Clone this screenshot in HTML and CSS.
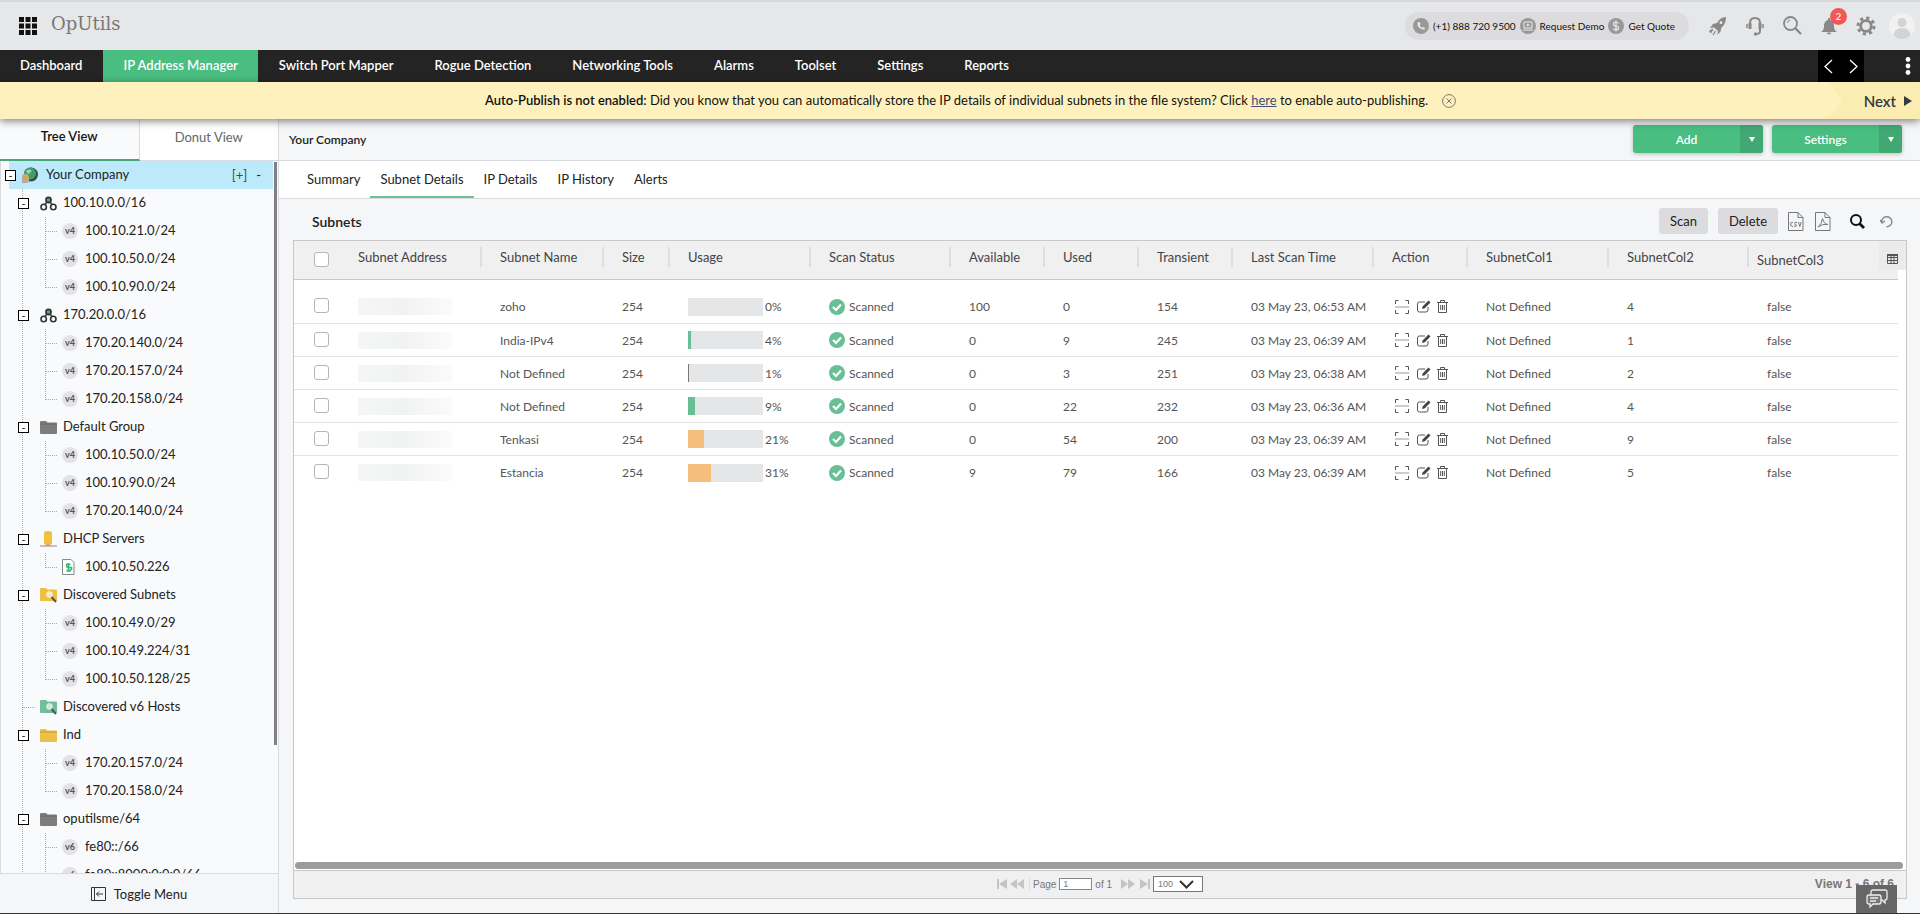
FILE: index.html
```html
<!DOCTYPE html>
<html lang="en">

<head>
    <meta charset="UTF-8">
    <meta name="viewport" content="width=device-width, initial-scale=1.0">
    <title>OpUtils</title>
    <link rel="stylesheet" href="styles.css">
</head>

<body>
    <!-- shared icons -->
    <svg class="sprite" aria-hidden="true">
        <symbol id="i-net" viewBox="0 0 17 15">
            <path d="M7 6 4.500 9M10 6l2.500 3" stroke="#444" stroke-width="1.500" />
            <g fill="none" stroke="#333" stroke-width="1.600">
                <circle cx="8.500" cy="4" r="2.600" fill="#5c9c7c" />
                <circle cx="3.700" cy="11" r="2.700" />
                <circle cx="13.300" cy="11" r="2.700" />
            </g>
        </symbol>
        <symbol id="i-folder" viewBox="0 0 17 14">
            <path d="M0 2q0-1 1-1h5l1.500 1.500H16q1 0 1 1V13q0 1-1 1H1q-1 0-1-1z" fill="currentColor" />
            <path d="M0 4h17" stroke="#000" stroke-opacity=".18" />
        </symbol>
        <symbol id="i-find" viewBox="0 0 17 16">
            <path d="M0 2q0-1 1-1h5l1.500 1.500H16q1 0 1 1V13q0 1-1 1H1q-1 0-1-1z" fill="currentColor" />
            <circle cx="9.500" cy="7.500" r="3" fill="#fff" fill-opacity=".65" stroke="#fff" stroke-opacity=".5" />
            <path d="m11.500 10 4.500 5" stroke="#555" stroke-width="2" />
        </symbol>
        <symbol id="i-ok" viewBox="0 0 16 16">
            <circle cx="8" cy="8" r="8" fill="#68bf96" />
            <path d="m4 8 3 3 5-5.500" fill="none" stroke="#fff" stroke-width="2.200" />
        </symbol>
        <symbol id="i-scan" viewBox="0 0 14 14">
            <path d="M.500 4V.500H3.500M10.500.500h3V4M.500 10v3.500h3M10.500 13.500h3V10" fill="none" stroke="#555" />
            <path d="M0 7h14" stroke="#999" />
        </symbol>
        <symbol id="i-edit" viewBox="0 0 15 13">
            <path d="M11 7v3q0 2-2 2H2.500q-2 0-2-2V4q0-2 2-2H8" fill="none" stroke="#555" />
            <path d="m5 9 .800-2.800L11.500.500l2 2L7.800 8.200z" fill="#444" />
        </symbol>
        <symbol id="i-trash" viewBox="0 0 11 13">
            <path d="M0 2.500h11M3.500 2.500v-2h4v2M1.500 2.500v10h8v-10M3.700 5v5M5.500 5v5M7.300 5v5" fill="none" stroke="#555" />
        </symbol>
    </svg>

    <header class="topbar">
        <button class="icon-btn" aria-label="Apps">
            <svg width="18" height="18" viewBox="0 0 18 18"><path d="M0 0h5v5H0zM6.500 0h5v5h-5zM13 0h5v5h-5zM0 6.500h5v5H0zM6.500 6.500h5v5h-5zM13 6.500h5v5h-5zM0 13h5v5H0zM6.500 13h5v5h-5zM13 13h5v5h-5z" fill="#111" /></svg>
        </button>
        <span class="brand">OpUtils</span>
        <div class="contact">
            <svg width="16" height="16" viewBox="0 0 16 16"><circle cx="8" cy="8" r="8" fill="#999" /><path d="M5 4q-1.500 3 1 5.500T11.500 11.500l.500-1.500-2-1-1 .800Q7.500 9 6.700 7.200L7.500 6l-1-2z" fill="#e8e8e8" /></svg>
            <a href="#">(+1) 888 720 9500</a>
            <svg width="16" height="16" viewBox="0 0 16 16"><circle cx="8" cy="8" r="8" fill="#999" /><path d="M4 4h8v6H4zM3 12h10" fill="none" stroke="#e8e8e8" /><path d="m7 5.500 3 1.500-3 1.500z" fill="#e8e8e8" /></svg>
            <a href="#">Request Demo</a>
            <svg width="16" height="16" viewBox="0 0 16 16"><circle cx="8" cy="8" r="8" fill="#999" /><path d="M10.500 5.500Q9.500 4 8 4 5.500 4 5.500 6T8 8t2.500 2T8 12q-2 0-2.500-1.500M8 2.500v11" fill="none" stroke="#e8e8e8" stroke-width="1.200" /></svg>
            <a href="#">Get Quote</a>
        </div>
        <div class="tools">
            <button class="icon-btn" aria-label="Quick start">
                <svg width="18" height="20" viewBox="0 0 18 20"><path d="M17 1q-6 0-9 6L4 8l-3 4 4-.500L9 15l-.500 4 3-3.500 1-4Q17 8 17 1z" fill="#888" /><circle cx="12" cy="6.500" r="1.500" fill="#e6e7e9" /><path d="m4 13-2.500 4M6.500 15 4 19M2.500 13.500.500 16" stroke="#888" stroke-width="1.300" /></svg>
            </button>
            <button class="icon-btn" aria-label="Support">
                <svg width="18" height="20" viewBox="0 0 18 20"><path d="M4 13V7q0-5 5-5t5 5v8q0 3-4 3" fill="none" stroke="#888" stroke-width="2" /><path d="M1 8v4M17 8v4" stroke="#888" stroke-width="1.500" /><circle cx="9.500" cy="18" r="1.700" fill="#888" /><path d="M4 7v6M14 7v6" stroke="#888" stroke-width="3" /></svg>
            </button>
            <button class="icon-btn" aria-label="Search">
                <svg width="19" height="19" viewBox="0 0 19 19" fill="none" stroke="#888"><circle cx="7.500" cy="7.500" r="6.500" stroke-width="1.800" /><path d="m12.500 12.500 5.500 5.500" stroke-width="2.400" /><path d="M4.500 7q0-2.500 2.500-3" /></svg>
            </button>
            <button class="icon-btn bell" aria-label="Notifications">
                <svg width="16" height="18" viewBox="0 0 16 18"><path d="M0 15q3-1.500 3-6 0-5 4-6V1h2v2q4 1 4 6 0 4.500 3 6z" fill="#888" /><path d="M6 15.500h4q0 2-2 2t-2-2z" fill="#888" /></svg>
                <span class="badge">2</span>
            </button>
            <button class="icon-btn" aria-label="Preferences">
                <svg width="20" height="20" viewBox="0 0 20 20" fill="none" stroke="#888"><circle cx="10" cy="10" r="5.300" stroke-width="2.800" /><circle cx="10" cy="10" r="8" stroke-width="3" stroke-dasharray="3.140 3.140" /></svg>
            </button>
        </div>
        <button class="icon-btn account" aria-label="Account">
            <svg width="26" height="26" viewBox="0 0 26 26"><circle cx="13" cy="13" r="13" fill="#f1f1f2" /><circle cx="13" cy="9.500" r="4.500" fill="#d2d3d5" /><path d="M4.500 22q1-7 8.500-7t8.500 7Q18 26 13 26t-8.500-4z" fill="#d2d3d5" /></svg>
        </button>
    </header>

    <nav class="mainnav">
        <a href="#">Dashboard</a>
        <a href="#" class="active">IP Address Manager</a>
        <a href="#">Switch Port Mapper</a>
        <a href="#">Rogue Detection</a>
        <a href="#">Networking Tools</a>
        <a href="#">Alarms</a>
        <a href="#">Toolset</a>
        <a href="#">Settings</a>
        <a href="#">Reports</a>
        <div class="nav-arrows">
            <button class="icon-btn" aria-label="Scroll left"><svg width="9" height="15" viewBox="0 0 9 15"><path d="M8 1 1 7.500 8 14" fill="none" stroke="#fff" stroke-width="1.300" /></svg></button>
            <button class="icon-btn" aria-label="Scroll right"><svg width="9" height="15" viewBox="0 0 9 15"><path d="m1 1 7 6.500L1 14" fill="none" stroke="#fff" stroke-width="1.300" /></svg></button>
        </div>
        <button class="icon-btn more" aria-label="More"><svg width="6" height="18" viewBox="0 0 6 18" fill="#fff"><circle cx="3" cy="2.500" r="2.400" /><circle cx="3" cy="9" r="2.400" /><circle cx="3" cy="15.500" r="2.400" /></svg></button>
    </nav>

    <div class="notice">
        <p><b>Auto-Publish is not enabled:</b> Did you know that you can automatically store the IP details of individual subnets in the file system? Click <a href="#">here</a> to enable auto-publishing.</p>
        <button class="icon-btn" aria-label="Dismiss"><svg width="14" height="14" viewBox="0 0 14 14" fill="none" stroke="#777"><circle cx="7" cy="7" r="6.400" /><path d="m4.500 4.500 5 5M9.500 4.500l-5 5" /></svg></button>
        <button class="next">Next <svg width="8" height="10" viewBox="0 0 8 10"><path d="m0 0 8 5-8 5z" fill="#333a44" /></svg></button>
    </div>

    <div class="page">
        <aside class="sidebar">
            <div class="view-tabs">
                <button class="active">Tree View</button>
                <button>Donut View</button>
            </div>
            <div class="tree-box">
                <div class="tree">
                    <div class="node root">
                        <button class="toggle">-</button>
                        <svg width="16" height="16" viewBox="0 0 16 16"><circle cx="9" cy="7.500" r="7" fill="#3b4a44" /><circle cx="8" cy="6.500" r="6" fill="#3f9d6c" /><path d="M4 4q3-3 6 0-2 1-3 3-2 0-3-3z" fill="#9fd4b4" /><path d="M0 16V9q2-4 5-1l2 2v5q-3 2-7 1z" fill="#b5aaa0" /><circle cx="4.500" cy="9.500" r="2.300" fill="#e0a93c" /></svg>
                        <a href="#">Your Company</a>
                        <span class="expand">[+]</span><span>-</span>
                    </div>
                    <ul>
                        <li>
                            <div class="node"><button class="toggle">-</button><svg width="17" height="15"><use href="#i-net" /></svg><a href="#">100.10.0.0/16</a></div>
                            <ul>
                                <li class="node"><span class="ver">v4</span><a href="#">100.10.21.0/24</a></li>
                                <li class="node"><span class="ver">v4</span><a href="#">100.10.50.0/24</a></li>
                                <li class="node"><span class="ver">v4</span><a href="#">100.10.90.0/24</a></li>
                            </ul>
                        </li>
                        <li>
                            <div class="node"><button class="toggle">-</button><svg width="17" height="15"><use href="#i-net" /></svg><a href="#">170.20.0.0/16</a></div>
                            <ul>
                                <li class="node"><span class="ver">v4</span><a href="#">170.20.140.0/24</a></li>
                                <li class="node"><span class="ver">v4</span><a href="#">170.20.157.0/24</a></li>
                                <li class="node"><span class="ver">v4</span><a href="#">170.20.158.0/24</a></li>
                            </ul>
                        </li>
                        <li>
                            <div class="node"><button class="toggle">-</button><svg class="gray" width="17" height="14"><use href="#i-folder" /></svg><a href="#">Default Group</a></div>
                            <ul>
                                <li class="node"><span class="ver">v4</span><a href="#">100.10.50.0/24</a></li>
                                <li class="node"><span class="ver">v4</span><a href="#">100.10.90.0/24</a></li>
                                <li class="node"><span class="ver">v4</span><a href="#">170.20.140.0/24</a></li>
                            </ul>
                        </li>
                        <li>
                            <div class="node"><button class="toggle">-</button><svg width="17" height="16" viewBox="0 0 17 16"><path d="M4 2q0-2 4-2t4 2v10q0 2-4 2t-4-2z" fill="#efc33c" /><path d="M4 2q4 2 8 0M6 12h4v3H6z" fill="#eda968" /><path d="M0 15h17" stroke="#888" /></svg><a href="#">DHCP Servers</a></div>
                            <ul>
                                <li class="node"><svg width="17" height="16" viewBox="0 0 17 16"><path d="M.500.500h8.500l3 3v12H.500z" fill="#fff" stroke="#888" /><path d="M8.500 5.500Q4.500 4 4.500 6.500t3.500 2-.200 3.500q-2 0-3.300-.800M6.500 4v9" fill="none" stroke="#35b879" stroke-width="1.600" /></svg><a href="#">100.10.50.226</a></li>
                            </ul>
                        </li>
                        <li>
                            <div class="node"><button class="toggle">-</button><svg class="yellow" width="17" height="16"><use href="#i-find" /></svg><a href="#">Discovered Subnets</a></div>
                            <ul>
                                <li class="node"><span class="ver">v4</span><a href="#">100.10.49.0/29</a></li>
                                <li class="node"><span class="ver">v4</span><a href="#">100.10.49.224/31</a></li>
                                <li class="node"><span class="ver">v4</span><a href="#">100.10.50.128/25</a></li>
                            </ul>
                        </li>
                        <li>
                            <div class="node leaf"><svg class="green" width="17" height="16"><use href="#i-find" /></svg><a href="#">Discovered v6 Hosts</a></div>
                        </li>
                        <li>
                            <div class="node"><button class="toggle">-</button><svg class="yellow" width="17" height="14"><use href="#i-folder" /></svg><a href="#">Ind</a></div>
                            <ul>
                                <li class="node"><span class="ver">v4</span><a href="#">170.20.157.0/24</a></li>
                                <li class="node"><span class="ver">v4</span><a href="#">170.20.158.0/24</a></li>
                            </ul>
                        </li>
                        <li>
                            <div class="node"><button class="toggle">-</button><svg class="gray" width="17" height="14"><use href="#i-folder" /></svg><a href="#">oputilsme/64</a></div>
                            <ul>
                                <li class="node"><span class="ver">v6</span><a href="#">fe80::/66</a></li>
                                <li class="node"><span class="ver">v6</span><a href="#">fe80::8000:0:0:0/66</a></li>
                                <li class="node"></li>
                            </ul>
                        </li>
                    </ul>
                </div>
                <div class="scroll-track"><div class="scroll-thumb"></div></div>
            </div>
            <button class="toggle-menu">
                <svg width="15" height="14" viewBox="0 0 15 14" fill="none" stroke="#333"><path d="M.500.500h14v13H.500zM3.500.500v13M12 7H5.500M8 4.500 5.500 7 8 9.500" /></svg>
                Toggle Menu
            </button>
        </aside>

        <main>
            <div class="crumb">
                <h1>Your Company</h1>
                <div class="split"><button>Add</button><button class="drop" aria-label="Add options"><svg width="6" height="5"><path d="M0 0h6L3 5z" fill="#fff" /></svg></button></div>
                <div class="split"><button>Settings</button><button class="drop" aria-label="Settings options"><svg width="6" height="5"><path d="M0 0h6L3 5z" fill="#fff" /></svg></button></div>
            </div>
            <nav class="subnav">
                <a href="#">Summary</a>
                <a href="#" class="active">Subnet Details</a>
                <a href="#">IP Details</a>
                <a href="#">IP History</a>
                <a href="#">Alerts</a>
            </nav>
            <div class="toolbar">
                <h2>Subnets</h2>
                <button class="grey-btn">Scan</button>
                <button class="grey-btn">Delete</button>
                <div class="exports">
                    <button class="icon-btn" aria-label="Export CSV"><svg width="16" height="19" viewBox="0 0 16 19" fill="none" stroke="#777"><path d="M.500.500h9.500l5 5v13H.500zM10 .500v5h5" /><path d="M5 10.500Q2.500 9.500 2.500 12T5 14.500M9 10.500Q6.500 9.500 6.800 11.500T8.500 13q0 2-2.500 1.300M10.500 10l1.300 4.500L13.200 10" /></svg></button>
                    <button class="icon-btn" aria-label="Export PDF"><svg width="16" height="19" viewBox="0 0 16 19" fill="none" stroke="#777"><path d="M.500.500h9.500l5 5v13H.500zM10 .500v5h5" /><path d="M3 15q4-3 4.500-8.500Q9 12 13 12.500q-6-1-10 2.500z" /></svg></button>
                </div>
                <button class="icon-btn" aria-label="Search subnets"><svg width="15" height="15" viewBox="0 0 15 15" fill="none" stroke="#111"><circle cx="6" cy="6" r="5" stroke-width="2" /><path d="m9.500 9.500 4.500 4.500" stroke-width="2.800" /></svg></button>
                <button class="icon-btn refresh" aria-label="Refresh"><svg width="13" height="13" viewBox="0 0 13 13" fill="none" stroke="#888" stroke-width="1.400"><path d="M2 8A5 5 0 1 1 6.500 11.700M0 5l2 3 3-2" /></svg></button>
            </div>

            <section class="grid">
                <div class="grid-body">
                    <table>
                        <colgroup>
                            <col class="w-check"><col class="w-addr"><col class="w-name"><col class="w-size"><col class="w-wide"><col class="w-status"><col class="w-num"><col class="w-num"><col class="w-num"><col class="w-wide"><col class="w-num"><col class="w-wide"><col class="w-status"><col class="w-last">
                        </colgroup>
                        <thead>
                            <tr>
                                <th class="check"><input type="checkbox" aria-label="Select all"></th>
                                <th><div>Subnet Address</div></th>
                                <th><div>Subnet Name</div></th>
                                <th><div>Size</div></th>
                                <th><div>Usage</div></th>
                                <th><div>Scan Status</div></th>
                                <th><div>Available</div></th>
                                <th><div>Used</div></th>
                                <th><div>Transient</div></th>
                                <th><div>Last Scan Time</div></th>
                                <th><div>Action</div></th>
                                <th><div>SubnetCol1</div></th>
                                <th><div>SubnetCol2</div></th>
                                <th class="last"><div>SubnetCol3 <button class="columns" aria-label="Choose columns"><svg width="11" height="10" viewBox="0 0 11 10"><path d="M.500.500h10v9H.500zM.500 3.500h10M.500 6.500h10M4 1v8.500M7 1v8.500" fill="none" stroke="#555" /><path d="M0 0h11v2H0z" fill="#555" /></svg></button></div></th>
                            </tr>
                        </thead>
                        <tbody>
                            <tr>
                                <td class="check"><input type="checkbox" aria-label="Select zoho"></td>
                                <td><div class="masked"></div></td>
                                <td>zoho</td>
                                <td>254</td>
                                <td><div class="usage"><div class="bar"></div>0%</div></td>
                                <td><div class="status"><svg width="16" height="16"><use href="#i-ok" /></svg>Scanned</div></td>
                                <td>100</td>
                                <td>0</td>
                                <td>154</td>
                                <td>03 May 23, 06:53 AM</td>
                                <td><div class="actions"><button class="icon-btn scan" aria-label="Scan"><svg width="14" height="14"><use href="#i-scan" /></svg></button><button class="icon-btn" aria-label="Edit"><svg width="15" height="13"><use href="#i-edit" /></svg></button><button class="icon-btn" aria-label="Delete"><svg width="11" height="13"><use href="#i-trash" /></svg></button></div></td>
                                <td>Not Defined</td>
                                <td>4</td>
                                <td>false</td>
                            </tr>
                            <tr>
                                <td class="check"><input type="checkbox" aria-label="Select India-IPv4"></td>
                                <td><div class="masked"></div></td>
                                <td>India-IPv4</td>
                                <td>254</td>
                                <td><div class="usage"><div class="bar"><div class="low" style="width: 4%"></div></div>4%</div></td>
                                <td><div class="status"><svg width="16" height="16"><use href="#i-ok" /></svg>Scanned</div></td>
                                <td>0</td>
                                <td>9</td>
                                <td>245</td>
                                <td>03 May 23, 06:39 AM</td>
                                <td><div class="actions"><button class="icon-btn scan" aria-label="Scan"><svg width="14" height="14"><use href="#i-scan" /></svg></button><button class="icon-btn" aria-label="Edit"><svg width="15" height="13"><use href="#i-edit" /></svg></button><button class="icon-btn" aria-label="Delete"><svg width="11" height="13"><use href="#i-trash" /></svg></button></div></td>
                                <td>Not Defined</td>
                                <td>1</td>
                                <td>false</td>
                            </tr>
                            <tr>
                                <td class="check"><input type="checkbox" aria-label="Select subnet 3"></td>
                                <td><div class="masked"></div></td>
                                <td>Not Defined</td>
                                <td>254</td>
                                <td><div class="usage"><div class="bar"><div class="min" style="width: 1%"></div></div>1%</div></td>
                                <td><div class="status"><svg width="16" height="16"><use href="#i-ok" /></svg>Scanned</div></td>
                                <td>0</td>
                                <td>3</td>
                                <td>251</td>
                                <td>03 May 23, 06:38 AM</td>
                                <td><div class="actions"><button class="icon-btn scan" aria-label="Scan"><svg width="14" height="14"><use href="#i-scan" /></svg></button><button class="icon-btn" aria-label="Edit"><svg width="15" height="13"><use href="#i-edit" /></svg></button><button class="icon-btn" aria-label="Delete"><svg width="11" height="13"><use href="#i-trash" /></svg></button></div></td>
                                <td>Not Defined</td>
                                <td>2</td>
                                <td>false</td>
                            </tr>
                            <tr>
                                <td class="check"><input type="checkbox" aria-label="Select subnet 4"></td>
                                <td><div class="masked"></div></td>
                                <td>Not Defined</td>
                                <td>254</td>
                                <td><div class="usage"><div class="bar"><div class="low" style="width: 9%"></div></div>9%</div></td>
                                <td><div class="status"><svg width="16" height="16"><use href="#i-ok" /></svg>Scanned</div></td>
                                <td>0</td>
                                <td>22</td>
                                <td>232</td>
                                <td>03 May 23, 06:36 AM</td>
                                <td><div class="actions"><button class="icon-btn scan" aria-label="Scan"><svg width="14" height="14"><use href="#i-scan" /></svg></button><button class="icon-btn" aria-label="Edit"><svg width="15" height="13"><use href="#i-edit" /></svg></button><button class="icon-btn" aria-label="Delete"><svg width="11" height="13"><use href="#i-trash" /></svg></button></div></td>
                                <td>Not Defined</td>
                                <td>4</td>
                                <td>false</td>
                            </tr>
                            <tr>
                                <td class="check"><input type="checkbox" aria-label="Select Tenkasi"></td>
                                <td><div class="masked"></div></td>
                                <td>Tenkasi</td>
                                <td>254</td>
                                <td><div class="usage"><div class="bar"><div class="mid" style="width: 21%"></div></div>21%</div></td>
                                <td><div class="status"><svg width="16" height="16"><use href="#i-ok" /></svg>Scanned</div></td>
                                <td>0</td>
                                <td>54</td>
                                <td>200</td>
                                <td>03 May 23, 06:39 AM</td>
                                <td><div class="actions"><button class="icon-btn scan" aria-label="Scan"><svg width="14" height="14"><use href="#i-scan" /></svg></button><button class="icon-btn" aria-label="Edit"><svg width="15" height="13"><use href="#i-edit" /></svg></button><button class="icon-btn" aria-label="Delete"><svg width="11" height="13"><use href="#i-trash" /></svg></button></div></td>
                                <td>Not Defined</td>
                                <td>9</td>
                                <td>false</td>
                            </tr>
                            <tr>
                                <td class="check"><input type="checkbox" aria-label="Select Estancia"></td>
                                <td><div class="masked"></div></td>
                                <td>Estancia</td>
                                <td>254</td>
                                <td><div class="usage"><div class="bar"><div class="mid" style="width: 31%"></div></div>31%</div></td>
                                <td><div class="status"><svg width="16" height="16"><use href="#i-ok" /></svg>Scanned</div></td>
                                <td>9</td>
                                <td>79</td>
                                <td>166</td>
                                <td>03 May 23, 06:39 AM</td>
                                <td><div class="actions"><button class="icon-btn scan" aria-label="Scan"><svg width="14" height="14"><use href="#i-scan" /></svg></button><button class="icon-btn" aria-label="Edit"><svg width="15" height="13"><use href="#i-edit" /></svg></button><button class="icon-btn" aria-label="Delete"><svg width="11" height="13"><use href="#i-trash" /></svg></button></div></td>
                                <td>Not Defined</td>
                                <td>5</td>
                                <td>false</td>
                            </tr>
                        </tbody>
                    </table>
                </div>
                <div class="hscroll"></div>
                <footer class="pager">
                    <div class="pages">
                        <button class="icon-btn" aria-label="First page"><svg width="10" height="10" viewBox="0 0 10 10" fill="#c4c4c4"><path d="M0 0h2v10H0zM10 0v10L2 5z" /></svg></button>
                        <button class="icon-btn" aria-label="Previous page"><svg width="14" height="10" viewBox="0 0 14 10" fill="#c4c4c4"><path d="M7 0v10L0 5zM14 0v10L7 5z" /></svg></button>
                        <label class="page-label">Page <input type="text" value="1"></label>
                        <span>of 1</span>
                        <button class="icon-btn next-page" aria-label="Next page"><svg width="14" height="10" viewBox="0 0 14 10" fill="#c4c4c4"><path d="M0 0v10l7-5zM7 0v10l7-5z" /></svg></button>
                        <button class="icon-btn" aria-label="Last page"><svg width="10" height="10" viewBox="0 0 10 10" fill="#c4c4c4"><path d="M8 0h2v10H8zM0 0v10l8-5z" /></svg></button>
                        <div class="size"><select aria-label="Rows per page"><option>100</option></select><svg width="15" height="9" viewBox="0 0 15 9"><path d="m1 1 6.500 6.500L14 1" fill="none" stroke="#333" stroke-width="2" /></svg></div>
                    </div>
                    <span class="view">View 1 - 6 of 6</span>
                </footer>
            </section>
        </main>
    </div>

    <button class="chat" aria-label="Chat">
        <svg width="22" height="20" viewBox="0 0 22 20" stroke="#eee" stroke-width="1.300"><path d="M7 1h12q2 0 2 2v6q0 2-2 2v3l-3-3H7q-2 0-2-2V3q0-2 2-2z" fill="none" /><path d="M3 6h10q2 0 2 2v5q0 2-2 2H7l-3 3v-3H3q-2 0-2-2V8q0-2 2-2z" fill="#777" /><path d="M4 9h8M4 12h6" /></svg>
    </button>
</body>

</html>
```
FILE: styles.css
```css
* {
    box-sizing: border-box;
}

body {
    margin: 0;
    height: 100vh;
    display: flex;
    flex-direction: column;
    overflow: hidden;
    font-family: Lato, sans-serif;
    font-size: 13px;
    color: #222;
    background-color: #f5f6f8;
    border-bottom: 1px solid #2b3440;
}

a {
    color: inherit;
    text-decoration: none;
}

b {
    font-weight: 600;
}

button {
    font: inherit;
    color: inherit;
    border: 0;
    padding: 0;
    background: none;
    cursor: pointer;
}

svg {
    display: block;
    flex-shrink: 0;
}

.sprite {
    width: 0;
    height: 0;
    position: absolute;
}

.icon-btn {
    display: flex;
    align-items: center;
    justify-content: center;
}

/* top bar */
.topbar {
    display: flex;
    align-items: center;
    height: 50px;
    flex-shrink: 0;
    padding: 0 5px 1px 19px;
    background-color: #e6e7e9;
    border-top: 2px solid #d6d8da;
}

.brand {
    margin-left: 14px;
    margin-right: auto;
    padding-bottom: 4px;
    font-family: "DejaVu Serif", serif;
    font-size: 18px;
    font-weight: 300;
    color: #777;
}

.contact {
    display: flex;
    align-items: center;
    gap: 4px;
    height: 28px;
    padding: 0 14px 0 8px;
    border-radius: 14px;
    background-color: #dcdcde;
    font-size: 10px;
    color: #111;
}

.tools {
    display: flex;
    align-items: center;
    gap: 19px;
    margin: 0 13px 0 20px;
}

.bell {
    position: relative;
}

.badge {
    position: absolute;
    top: -9px;
    right: -10px;
    width: 17px;
    height: 17px;
    border-radius: 50%;
    background-color: #f25757;
    color: #fff;
    font-size: 10px;
    line-height: 17px;
}

/* main navigation */
.mainnav {
    display: flex;
    gap: 1px;
    height: 32px;
    flex-shrink: 0;
    background-color: #242424;
    color: #fff;
    font-size: 13px;
    font-weight: 600;
}

.mainnav a {
    padding: 0 20px;
    line-height: 31px;
}

.mainnav .active {
    background-color: #4abd80;
}

.nav-arrows {
    display: flex;
    gap: 16px;
    margin-left: auto;
    padding: 0 6px;
    background-color: #000;
}

.more {
    margin: 0 9px 0 40px;
}

/* notice */
.notice {
    display: flex;
    align-items: center;
    height: 37px;
    flex-shrink: 0;
    background-color: #fff1bd;
    box-shadow: 0 2px 8px rgba(0, 0, 0, 0.5);
    z-index: 1;
    color: #111;
}

.notice p {
    margin: 0 14px 0 auto;
    padding-bottom: 1px;
}

.notice p a {
    color: #3c4f7c;
    text-decoration: underline;
}

.next {
    display: flex;
    align-items: center;
    justify-content: flex-end;
    gap: 8px;
    align-self: stretch;
    width: 92px;
    margin-left: 372px;
    padding-right: 8px;
    background-color: #fbecb2;
    clip-path: polygon(0 0, 100% 0, 100% 100%, 0 100%, 15px 50%);
    font-size: 15px;
    font-weight: 600;
    color: #333a44;
}

.page {
    display: flex;
    flex: 1;
    min-height: 0;
}

/* sidebar */
.sidebar {
    display: flex;
    flex-direction: column;
    width: 279px;
    flex-shrink: 0;
    border-right: 1px solid #d9dbde;
}

.view-tabs {
    display: flex;
    height: 42px;
    flex-shrink: 0;
}

.view-tabs button {
    flex: 1;
    padding-bottom: 6px;
    background-color: #fff;
    border-bottom: 1px solid #d9dbde;
    color: #666;
}

.view-tabs .active {
    border-right: 1px solid #d9dbde;
    border-bottom: 2px solid #4aa679;
    background-color: #f9fafb;
    font-weight: 600;
    color: #111;
}

.tree-box {
    display: flex;
    flex: 1;
    min-height: 0;
    overflow: hidden;
    background-color: #f9fafc;
    border-left: 1px solid #d9dbde;
    border-bottom: 1px solid #d9dbde;
}

.tree {
    flex: 1;
    color: #222;
}

.tree ul {
    margin: 0;
    padding: 0;
    list-style: none;
}

.node {
    display: flex;
    align-items: center;
    height: 28px;
}

.node a {
    padding-bottom: 3px;
}

.root {
    gap: 6px;
    padding: 0 12px 0 4px;
    background: linear-gradient(90deg, #f9fafc 8px, #bdeafb 8px);
}

.expand {
    margin-left: auto;
    margin-right: 3px;
    color: #285a41;
}

.toggle {
    width: 11px;
    height: 11px;
    border: 1px solid #000;
    background-color: #fff;
    font-size: 11px;
    line-height: 7px;
}

/* dotted guide lines */
.tree li {
    background: repeating-linear-gradient(#aaa 0 1px, transparent 1px 2px) no-repeat 21px 0 / 1px 100%;
}

.tree ul ul li {
    padding-left: 44px;
    background-position: 44px 0;
}

.tree ul ul li:last-child {
    background-size: 1px 14px;
}

.tree ul ul .node::before,
.leaf::before {
    content: "";
    flex-shrink: 0;
    width: 12px;
    margin-right: 5px;
    border-top: 1px dotted #aaa;
}

.tree ul > li > .node:not(.leaf) {
    padding-left: 17px;
}

.leaf {
    padding-left: 22px;
}

.tree li .toggle {
    margin-right: 11px;
}

.node svg + a,
.ver + a {
    margin-left: 6px;
}

.root svg + a {
    margin-left: 2px;
}

.ver {
    width: 16px;
    height: 16px;
    margin-right: 1px;
    border-radius: 50%;
    background-color: #e3e3e5;
    font-size: 9px;
    font-weight: 700;
    line-height: 15px;
    text-align: center;
    color: #555;
}

.gray {
    color: #7d7d7d;
}

.yellow {
    color: #f0bf45;
}

.green {
    color: #6fbf9b;
}

.scroll-track {
    width: 5px;
    padding: 1px 1px 0;
}

.scroll-thumb {
    height: 82%;
    background-color: #808083;
}

.toggle-menu {
    display: flex;
    align-items: center;
    justify-content: center;
    gap: 8px;
    height: 39px;
    flex-shrink: 0;
}

/* content */
main {
    display: flex;
    flex-direction: column;
    flex: 1;
    min-width: 0;
}

.crumb {
    display: flex;
    align-items: center;
    gap: 9px;
    height: 42px;
    flex-shrink: 0;
    padding: 0 18px 1px 10px;
    border-bottom: 1px solid #d9dbde;
}

h1 {
    margin: 0 auto 0 0;
    font-size: 12px;
    font-weight: 600;
}

.split {
    display: flex;
    width: 130px;
    height: 28px;
    border-radius: 3px;
    overflow: hidden;
    background-color: #4abd80;
    box-shadow: 0 1px 4px rgba(0, 0, 0, 0.25);
    color: #fff;
    font-size: 12px;
    font-weight: 600;
}

.split button {
    flex: 1;
}

.split .drop {
    display: flex;
    align-items: center;
    justify-content: center;
    flex: 0 0 23px;
    background-color: #42a873;
}

.subnav {
    display: flex;
    height: 38px;
    flex-shrink: 0;
    padding-left: 18px;
    background-color: #fff;
    border-bottom: 1px solid #d9dbde;
}

.subnav a {
    padding: 0 10px;
    line-height: 36px;
}

.subnav .active {
    border-bottom: 2px solid #6cc294;
}

.toolbar {
    display: flex;
    align-items: center;
    height: 41px;
    flex-shrink: 0;
    padding: 3px 27px 0 33px;
}

h2 {
    margin: 0 auto 0 0;
    font-size: 14px;
    font-weight: 600;
}

.grey-btn {
    height: 26px;
    margin-right: 10px;
    padding: 0 11px;
    border-radius: 3px;
    background-color: #dcdcde;
}

.exports {
    display: flex;
    gap: 11px;
    margin-right: 19px;
}

.refresh {
    margin-left: 15px;
}

.grid {
    display: flex;
    flex-direction: column;
    flex: 1;
    margin: 0 13px 14px 14px;
    background-color: #fff;
    border: 1px solid #c8c8c8;
    min-height: 0;
}

.grid-body {
    flex: 1;
    min-height: 0;
    padding-right: 8px;
}

table {
    width: 100%;
    table-layout: fixed;
    border-collapse: separate;
    border-spacing: 0;
    color: #555;
    font-size: 12px;
}

.w-check { width: 46px; }
.w-addr { width: 142px; }
.w-name { width: 122px; }
.w-size { width: 66px; }
.w-wide { width: 141px; }
.w-status { width: 140px; }
.w-num { width: 94px; }
.w-last { width: 149px; }

th {
    height: 39px;
    padding: 0;
    vertical-align: top;
    text-align: left;
    background-color: #f0f0f0;
    border-bottom: 1px solid #c8c8c8;
    font-size: 13px;
    font-weight: 400;
    color: #444;
    white-space: nowrap;
}

th div {
    height: 20px;
    margin-top: 6px;
    padding-left: 18px;
    border-right: 2px solid #dcdee0;
    line-height: 20px;
}

th.last div {
    display: flex;
    justify-content: space-between;
    padding-left: 8px;
    padding-top: 3px;
    border: 0;
}

.columns {
    display: flex;
    align-items: center;
    justify-content: center;
    flex-shrink: 0;
    width: 27px;
    height: 29px;
    margin: -9px -8px 0 0;
    padding-top: 6px;
    background-color: #ebebec;
}

td {
    height: 33px;
    padding: 0 0 0 18px;
    border-bottom: 1px solid #e2e3e5;
    white-space: nowrap;
}

tr:first-child td {
    height: 44px;
    padding-top: 10px;
}

tr:last-child td {
    border-bottom: 0;
}

td.check,
th.check {
    padding-left: 20px;
    vertical-align: middle;
}

input[type="checkbox"] {
    appearance: none;
    display: block;
    width: 15px;
    height: 15px;
    margin: 0 0 2px;
    border: 1px solid #b5b5b5;
    border-radius: 3px;
    background-color: #fff;
}

.masked {
    width: 94px;
    height: 17px;
    background: linear-gradient(90deg, #f5f6f6, #f1f2f2 50%, #fbfbfb);
}

.usage,
.status,
.actions {
    display: flex;
    align-items: center;
}

.usage {
    gap: 2px;
}

.bar {
    width: 75px;
    height: 18px;
    background-color: #e5e6e8;
}

.bar div {
    height: 100%;
}

.low {
    background-color: #68bf96;
}

.min {
    background-color: #777;
}

.mid {
    background-color: #f6be7b;
}

.status {
    gap: 4px;
}

.actions {
    gap: 5px;
    padding-left: 3px;
}

.scan {
    margin-right: 3px;
}

.hscroll {
    height: 7px;
    margin: 0 3px 1px 1px;
    border-radius: 4px;
    background-color: #9c9c9c;
    flex-shrink: 0;
}

.pager {
    display: grid;
    grid-template-columns: 1fr auto 1fr;
    align-items: center;
    height: 28px;
    flex-shrink: 0;
    padding-bottom: 1px;
    background-color: #f0f0f0;
    border-top: 1px solid #c8c8c8;
    font-family: "Liberation Sans", Arial, sans-serif;
    font-size: 10px;
    color: #777;
}

.pages {
    grid-column: 2;
    display: flex;
    align-items: center;
    gap: 3px;
}

.page-label {
    display: flex;
    align-items: center;
    gap: 3px;
    margin-left: 2px;
    padding-left: 3px;
    border-left: 1px solid #ddd;
}

.page-label input {
    width: 33px;
    height: 12px;
    padding: 0 3px;
    border: 1px solid #888;
    font: inherit;
    font-size: 9px;
    color: inherit;
}

.next-page {
    margin: 0 2px 0 6px;
}

.size {
    display: grid;
    align-items: center;
}

.size select,
.size svg {
    grid-area: 1 / 1;
}

.size select {
    appearance: none;
    width: 50px;
    height: 16px;
    padding: 0 4px;
    border: 1px solid #777;
    border-radius: 0;
    background-color: #fff;
    font: inherit;
    font-size: 9px;
    color: inherit;
}

.size svg {
    justify-self: end;
    margin-right: 9px;
    pointer-events: none;
}

.view {
    justify-self: end;
    padding-right: 12px;
    font-size: 12px;
    font-weight: 700;
}

/* floating chat button */
.chat {
    position: fixed;
    right: 23px;
    bottom: 1px;
    width: 41px;
    height: 28px;
    display: flex;
    align-items: center;
    justify-content: center;
    background-color: #666;
    z-index: 2;
}
```
